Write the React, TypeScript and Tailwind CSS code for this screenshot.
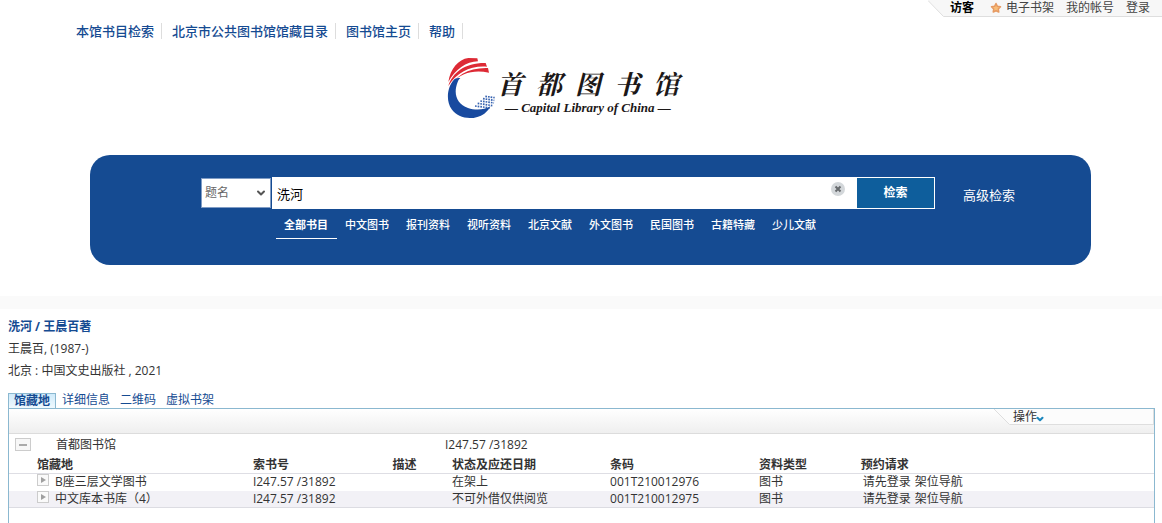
import React, { useState } from "react";
import { ChevronDown } from "lucide-react";

interface Holding {
  id: number;
  location: string;
  callNumber: string;
  description: string;
  status: string;
  barcode: string;
  type: string;
}

const navLinks = ["本馆书目检索", "北京市公共图书馆馆藏目录", "图书馆主页", "帮助"];

const categories = [
  "全部书目",
  "中文图书",
  "报刊资料",
  "视听资料",
  "北京文献",
  "外文图书",
  "民国图书",
  "古籍特藏",
  "少儿文献",
];

const tabs = ["馆藏地", "详细信息", "二维码", "虚拟书架"];

const holdings: Holding[] = [
  {
    id: 1,
    location: "B座三层文学图书",
    callNumber: "I247.57 /31892",
    description: "",
    status: "在架上",
    barcode: "001T210012976",
    type: "图书",
  },
  {
    id: 2,
    location: "中文库本书库（4）",
    callNumber: "I247.57 /31892",
    description: "",
    status: "不可外借仅供阅览",
    barcode: "001T210012975",
    type: "图书",
  },
];

const UserBar: React.FC = () => (
  <div className="flex justify-end h-[17px] text-xs leading-4 text-[#444]">
    <svg width="16" height="17" viewBox="0 0 16 17" aria-hidden="true">
      <path d="M0 0H16V17Z" fill="#f7f7f7" />
      <path d="M0 .5L15.500 16.500H16" fill="none" stroke="#dedede" />
    </svg>
    <div className="flex items-center gap-3 bg-[#f7f7f7] border-b border-[#dedede] pl-1.5 pr-3">
      <span className="font-bold text-black mr-1">访客</span>
      <a href="#shelf" className="flex items-center gap-1">
        <svg width="12" height="12" viewBox="0 0 12 12" aria-hidden="true">
          <path
            d="M6 1.500L7.400 4.300L10.500 4.800L8.300 7L8.800 10L6 8.700L3.200 10L3.700 7L1.500 4.800L4.600 4.300Z"
            fill="#f8bd78"
            stroke="#e69a62"
            strokeWidth="1.500"
            strokeLinejoin="round"
          />
        </svg>
        电子书架
      </a>
      <a href="#account">我的帐号</a>
      <a href="#login">登录</a>
    </div>
  </div>
);

const Logo: React.FC = () => (
  <div className="flex justify-center pr-9">
    <a href="#home" className="flex items-start text-[#1c1818]">
      <svg width="50" height="64" viewBox="24 18 150 192" aria-hidden="true">
        <g fill="#dd2a35">
          <path d="M28 96C34 56 58 28 88 24L115 25L117 34C82 35 48 58 28 96Z" />
          <path d="M28 108C40 68 78 38 140 39L144 50C96 46 54 66 28 108Z" />
          <path d="M28 118C48 78 88 52 147 54L150 68C104 58 66 70 43 95Z" />
        </g>
        <path
          d="M46 88C24 112 20 152 38 178C58 207 104 213 136 191C145 184 151 177 154 169C134 181 108 181 87 174C53 162 42 132 56 96C58 91 60 88 64 84C56 84 51 84 46 88Z"
          fill="#184a9f"
        />
        <g fill="none" stroke="#3763b0" strokeWidth="5" strokeDasharray="5 3">
          <path d="M139 139L167 143" />
          <path d="M132 146L166 151" />
          <path d="M124 153L165 159" />
          <path d="M116 160L160 167" />
          <path d="M108 168L154 174" />
        </g>
      </svg>
      <div className="pt-2.5">
        <div className="flex gap-[13px] font-bold italic text-[26px] leading-[34px] font-['Noto_Serif_CJK_SC','Noto_Sans_CJK_SC',serif]">
          <span>首</span>
          <span>都</span>
          <span>图</span>
          <span>书</span>
          <span>馆</span>
        </div>
        <div className="pl-2 font-bold italic text-[13px] leading-4 whitespace-nowrap font-['Liberation_Serif',serif]">
          — Capital Library of China —
        </div>
      </div>
    </a>
  </div>
);

const SearchPanel: React.FC = () => {
  const [query, setQuery] = useState("洗河");
  const [category, setCategory] = useState("全部书目");

  return (
    <form
      onSubmit={(e) => e.preventDefault()}
      className="ml-[90px] mr-[71px] h-[110px] rounded-[20px] bg-[#154b92] pt-[22px] pl-[111px] pr-[76px] text-white"
    >
      <div className="flex items-center">
        <div className="relative w-[70px] mr-px">
          <select
            aria-label="检索字段"
            className="appearance-none w-full h-[30px] bg-white border border-[#7f9cc5] pl-[3px] text-xs text-[#666]"
          >
            <option>题名</option>
          </select>
          <ChevronDown
            size={12}
            strokeWidth={4}
            className="absolute right-1 top-[9px] text-[#555] pointer-events-none"
          />
        </div>
        <div className="relative flex-1">
          <input
            type="text"
            aria-label="检索词"
            value={query}
            onChange={(e) => setQuery(e.target.value)}
            className="block w-full h-8 bg-white pl-[5px] pr-8 text-[13px] text-black outline-none"
          />
          <button
            type="button"
            aria-label="清除"
            onClick={() => setQuery("")}
            className="absolute right-[11px] top-[5px]"
          >
            <svg width="14" height="14" viewBox="0 0 14 14" aria-hidden="true">
              <circle cx="7" cy="7" r="7" fill="#d3d7da" />
              <path d="M4.500 4.500L9.500 9.500M9.500 4.500L4.500 9.500" stroke="#666a6d" strokeWidth="2" />
            </svg>
          </button>
        </div>
        <button
          type="submit"
          className="w-[79px] h-8 bg-[#0e5e9c] border border-white text-xs font-bold"
        >
          检索
        </button>
        <a href="#advanced" className="ml-7 pt-1.5 text-[13px]">
          高级检索
        </a>
      </div>
      <div className="flex ml-[75px] text-[11px] leading-4">
        {categories.map((name) => (
          <button
            key={name}
            type="button"
            onClick={() => setCategory(name)}
            className={`pl-2 pr-[9px] pt-2 pb-[5px] border-b whitespace-nowrap ${
              name === category ? "border-white font-bold" : "border-transparent font-medium"
            }`}
          >
            {name}
          </button>
        ))}
      </div>
    </form>
  );
};

const HoldingsPanel: React.FC = () => (
  <div className="flex-1 border border-b-0 border-[#8bb8d0]">
    <div className="flex justify-end items-start h-[25px] border-b border-[#dcdcdc] bg-linear-to-b from-white to-[#efefef]">
      <svg width="16" height="16" viewBox="0 0 16 16" aria-hidden="true">
        <path d="M0 0H16V16Z" fill="#fcfcfc" />
        <path d="M0 0L15.500 15.500H16" fill="none" stroke="#dedede" />
      </svg>
      <button
        type="button"
        className="flex items-center w-36 h-4 pl-[3px] bg-[#fcfcfc] border-b border-r border-[#dedede] leading-4"
      >
        操作
        <ChevronDown size={10} strokeWidth={5} className="-ml-0.5 mt-1 text-[#1b87bd]" />
      </button>
    </div>
    <div className="flex items-center h-[23px] pl-1.5 pb-0.5">
      <button
        type="button"
        aria-label="收起"
        className="flex items-center justify-center w-4 h-[13px] bg-[#f7f7f7] border border-[#ccc]"
      >
        <span className="w-2 h-0.5 bg-[#aaa]" />
      </button>
      <span className="w-[388px] pl-[25px]">首都图书馆</span>
      <span className="pl-[26px]">I247.57 /31892</span>
    </div>
    <table className="w-full table-fixed border-collapse leading-4 text-left">
      <colgroup>
        <col className="w-[21.3%]" />
        <col className="w-[12.2%]" />
        <col className="w-[5.2%]" />
        <col className="w-[13.8%]" />
        <col className="w-[13%]" />
        <col className="w-[8.9%]" />
        <col />
      </colgroup>
      <thead>
        <tr className="border-b border-[#dedee4]">
          <th className="p-0 pl-7">馆藏地</th>
          <th className="p-0">索书号</th>
          <th className="p-0">描述</th>
          <th className="p-0">状态及应还日期</th>
          <th className="p-0">条码</th>
          <th className="p-0">资料类型</th>
          <th className="p-0">预约请求</th>
        </tr>
      </thead>
      <tbody>
        {holdings.map((item) => (
          <tr
            key={item.id}
            className="h-[17px] whitespace-nowrap even:bg-[#f2f1f6] last:border-b last:border-[#dcdce2]"
          >
            <td className="p-0 pl-7">
              <div className="flex items-center gap-1.5">
                <button
                  type="button"
                  aria-label="展开"
                  className="flex items-center justify-center size-3 mb-1 bg-[#fafafa] border border-[#ccc]"
                >
                  <svg width="5" height="6" viewBox="0 0 5 6" aria-hidden="true">
                    <path d="M0 0L5 3L0 6Z" fill="#a0a0a0" />
                  </svg>
                </button>
                {item.location}
              </div>
            </td>
            <td className="p-0">{item.callNumber}</td>
            <td className="p-0">{item.description}</td>
            <td className="p-0">{item.status}</td>
            <td className="p-0">{item.barcode}</td>
            <td className="p-0">{item.type}</td>
            <td className="p-0">
              <div className="flex gap-1 pl-0.5">
                <a href="#login">请先登录</a>
                <a href="#map">架位导航</a>
              </div>
            </td>
          </tr>
        ))}
      </tbody>
    </table>
  </div>
);

const App: React.FC = () => {
  const [activeTab, setActiveTab] = useState("馆藏地");

  return (
    <div className="flex flex-col min-h-screen bg-white text-xs text-[#333] font-['Open_Sans','Noto_Sans_CJK_SC',sans-serif]">
      <UserBar />
      <nav className="flex pt-1.5 pl-[66px] text-[13px] leading-4 font-medium text-[#154b92]">
        {navLinks.map((link) => (
          <a key={link} href="#nav" className="pl-2.5 pr-[7px] border-r border-[#ddd]">
            {link}
          </a>
        ))}
      </nav>
      <div className="pt-[17px] pb-[35px]">
        <Logo />
      </div>
      <SearchPanel />
      <div className="mt-[31px] h-[13px] bg-[#fafafa]" />
      <main className="flex flex-col flex-1 pl-2 pr-[7px]">
        <div className="pt-[7px] leading-[22px]">
          <h1 className="font-bold text-[#154b92]">洗河 / 王晨百著</h1>
          <p>王晨百, (1987-)</p>
          <p>北京 : 中国文史出版社 , 2021</p>
        </div>
        <div className="flex pt-[11px] leading-[14px] text-[#154b92]">
          {tabs.map((tab) => (
            <button
              key={tab}
              type="button"
              onClick={() => setActiveTab(tab)}
              className={
                tab === activeTab
                  ? "px-[5px] mr-[1px] bg-linear-to-b from-[#cfeafa] to-[#f0f9fe] border border-b-0 border-[#8bb8d0] font-bold"
                  : "px-[5px] pb-px"
              }
            >
              {tab}
            </button>
          ))}
        </div>
        <HoldingsPanel />
      </main>
    </div>
  );
};

export default App;
